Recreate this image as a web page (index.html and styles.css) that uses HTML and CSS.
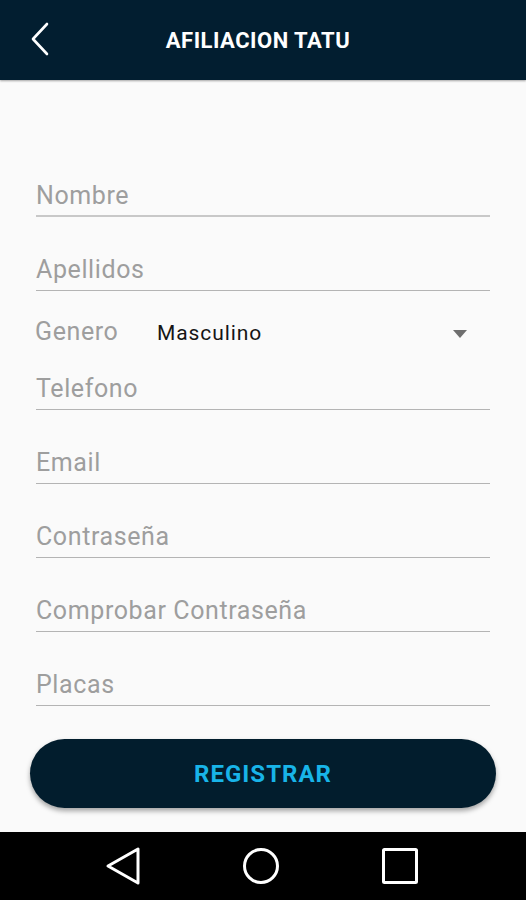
FILE: index.html
```html
<!DOCTYPE html>
<html lang="es">
<head>
<meta charset="utf-8">
<title>Afiliacion Tatu</title>
<link rel="stylesheet" href="styles.css">
</head>
<body>
<div class="screen">
  <header class="appbar">
    <svg class="back" width="20" height="36" viewBox="0 0 20 36" aria-hidden="true">
      <polyline points="16,2 2,17 16,32" fill="none" stroke="#ffffff" stroke-width="2.6" stroke-linecap="round" stroke-linejoin="round"/>
    </svg>
    <h1 class="title">AFILIACION TATU</h1>
  </header>

  <main class="form">
    <div class="field field-first">Nombre</div>
    <div class="field">Apellidos</div>
    <div class="select-row">
      <span class="select-label">Genero</span>
      <span class="select-value">Masculino</span>
      <span class="caret"></span>
    </div>
    <div class="field">Telefono</div>
    <div class="field">Email</div>
    <div class="field">Contraseña</div>
    <div class="field">Comprobar Contraseña</div>
    <div class="field">Placas</div>
    <button class="btn" type="button">REGISTRAR</button>
  </main>

  <nav class="navbar">
    <svg width="36" height="40" viewBox="0 0 36 40" aria-hidden="true">
      <polygon points="33,3 33,37 3,20" fill="none" stroke="#fff" stroke-width="3" stroke-linejoin="round"/>
    </svg>
    <svg width="38" height="38" viewBox="0 0 38 38" aria-hidden="true">
      <circle cx="19" cy="19" r="16.5" fill="none" stroke="#fff" stroke-width="3"/>
    </svg>
    <svg width="38" height="38" viewBox="0 0 38 38" aria-hidden="true">
      <rect x="2.5" y="2.5" width="33" height="33" rx="1" fill="none" stroke="#fff" stroke-width="3"/>
    </svg>
  </nav>
</div>
</body>
</html>
```
FILE: styles.css
```css
* { box-sizing: border-box; }
html, body {
  margin: 0;
  padding: 0;
  background: #fafafa;
}
body {
  font-family: Roboto, "Liberation Sans", Arial, sans-serif;
}
.screen {
  width: 526px;
  height: 900px;
  display: flex;
  flex-direction: column;
  background: #fafafa;
  overflow: hidden;
}
.appbar {
  height: 80px;
  flex: none;
  background: #021e30;
  display: flex;
  align-items: center;
  position: relative;
  box-shadow: 0 1px 2px rgba(0,0,0,0.35);
}
.back {
  margin-left: 31px;
  flex: none;
}
.title {
  position: absolute;
  left: 0;
  right: 0;
  text-align: center;
  margin: 0;
  padding-right: 10px;
  color: #ffffff;
  font-size: 22px;
  font-weight: 700;
  letter-spacing: 0.5px;
  pointer-events: none;
}
.form {
  flex: 1;
  display: flex;
  flex-direction: column;
  padding: 63px 36px 0 36px;
}
.field {
  height: 74px;
  padding-top: 39px;
  line-height: 28px;
  font-size: 25px;
  letter-spacing: 0.6px;
  color: #9e9e9e;
  border-bottom: 1.5px solid #b4b4b4;
}
.field-first {
  border-bottom: 2.5px solid #c8c8c8;
}
.select-row {
  height: 55px;
  margin-bottom: -10px;
  padding-top: 27px;
  display: flex;
  align-items: baseline;
  line-height: 28px;
  margin-left: -1px;
}
.select-label {
  font-size: 25px;
  letter-spacing: 0.6px;
  color: #9e9e9e;
  width: 122px;
}
.select-value {
  font-size: 21px;
  letter-spacing: 0.9px;
  color: #151515;
  flex: 1;
}
.caret {
  width: 0;
  height: 0;
  border-left: 7px solid transparent;
  border-right: 7px solid transparent;
  border-top: 8px solid #6e6e6e;
  margin-right: 23px;
  align-self: center;
  margin-top: 3px;
}
.btn {
  margin: 33px -6px 0 -6px;
  height: 69px;
  border: none;
  border-radius: 35px;
  background: #021d2d;
  color: #18b4e8;
  font-family: Roboto, "Liberation Sans", Arial, sans-serif;
  font-size: 24px;
  letter-spacing: 1px;
  font-weight: 700;
  box-shadow: 0 3px 5px rgba(0,0,0,0.35);
  padding: 0;
}
.navbar {
  height: 68px;
  flex: none;
  background: #000000;
  display: flex;
  align-items: center;
  justify-content: space-between;
  padding: 0 107px 0 105px;
}
```
